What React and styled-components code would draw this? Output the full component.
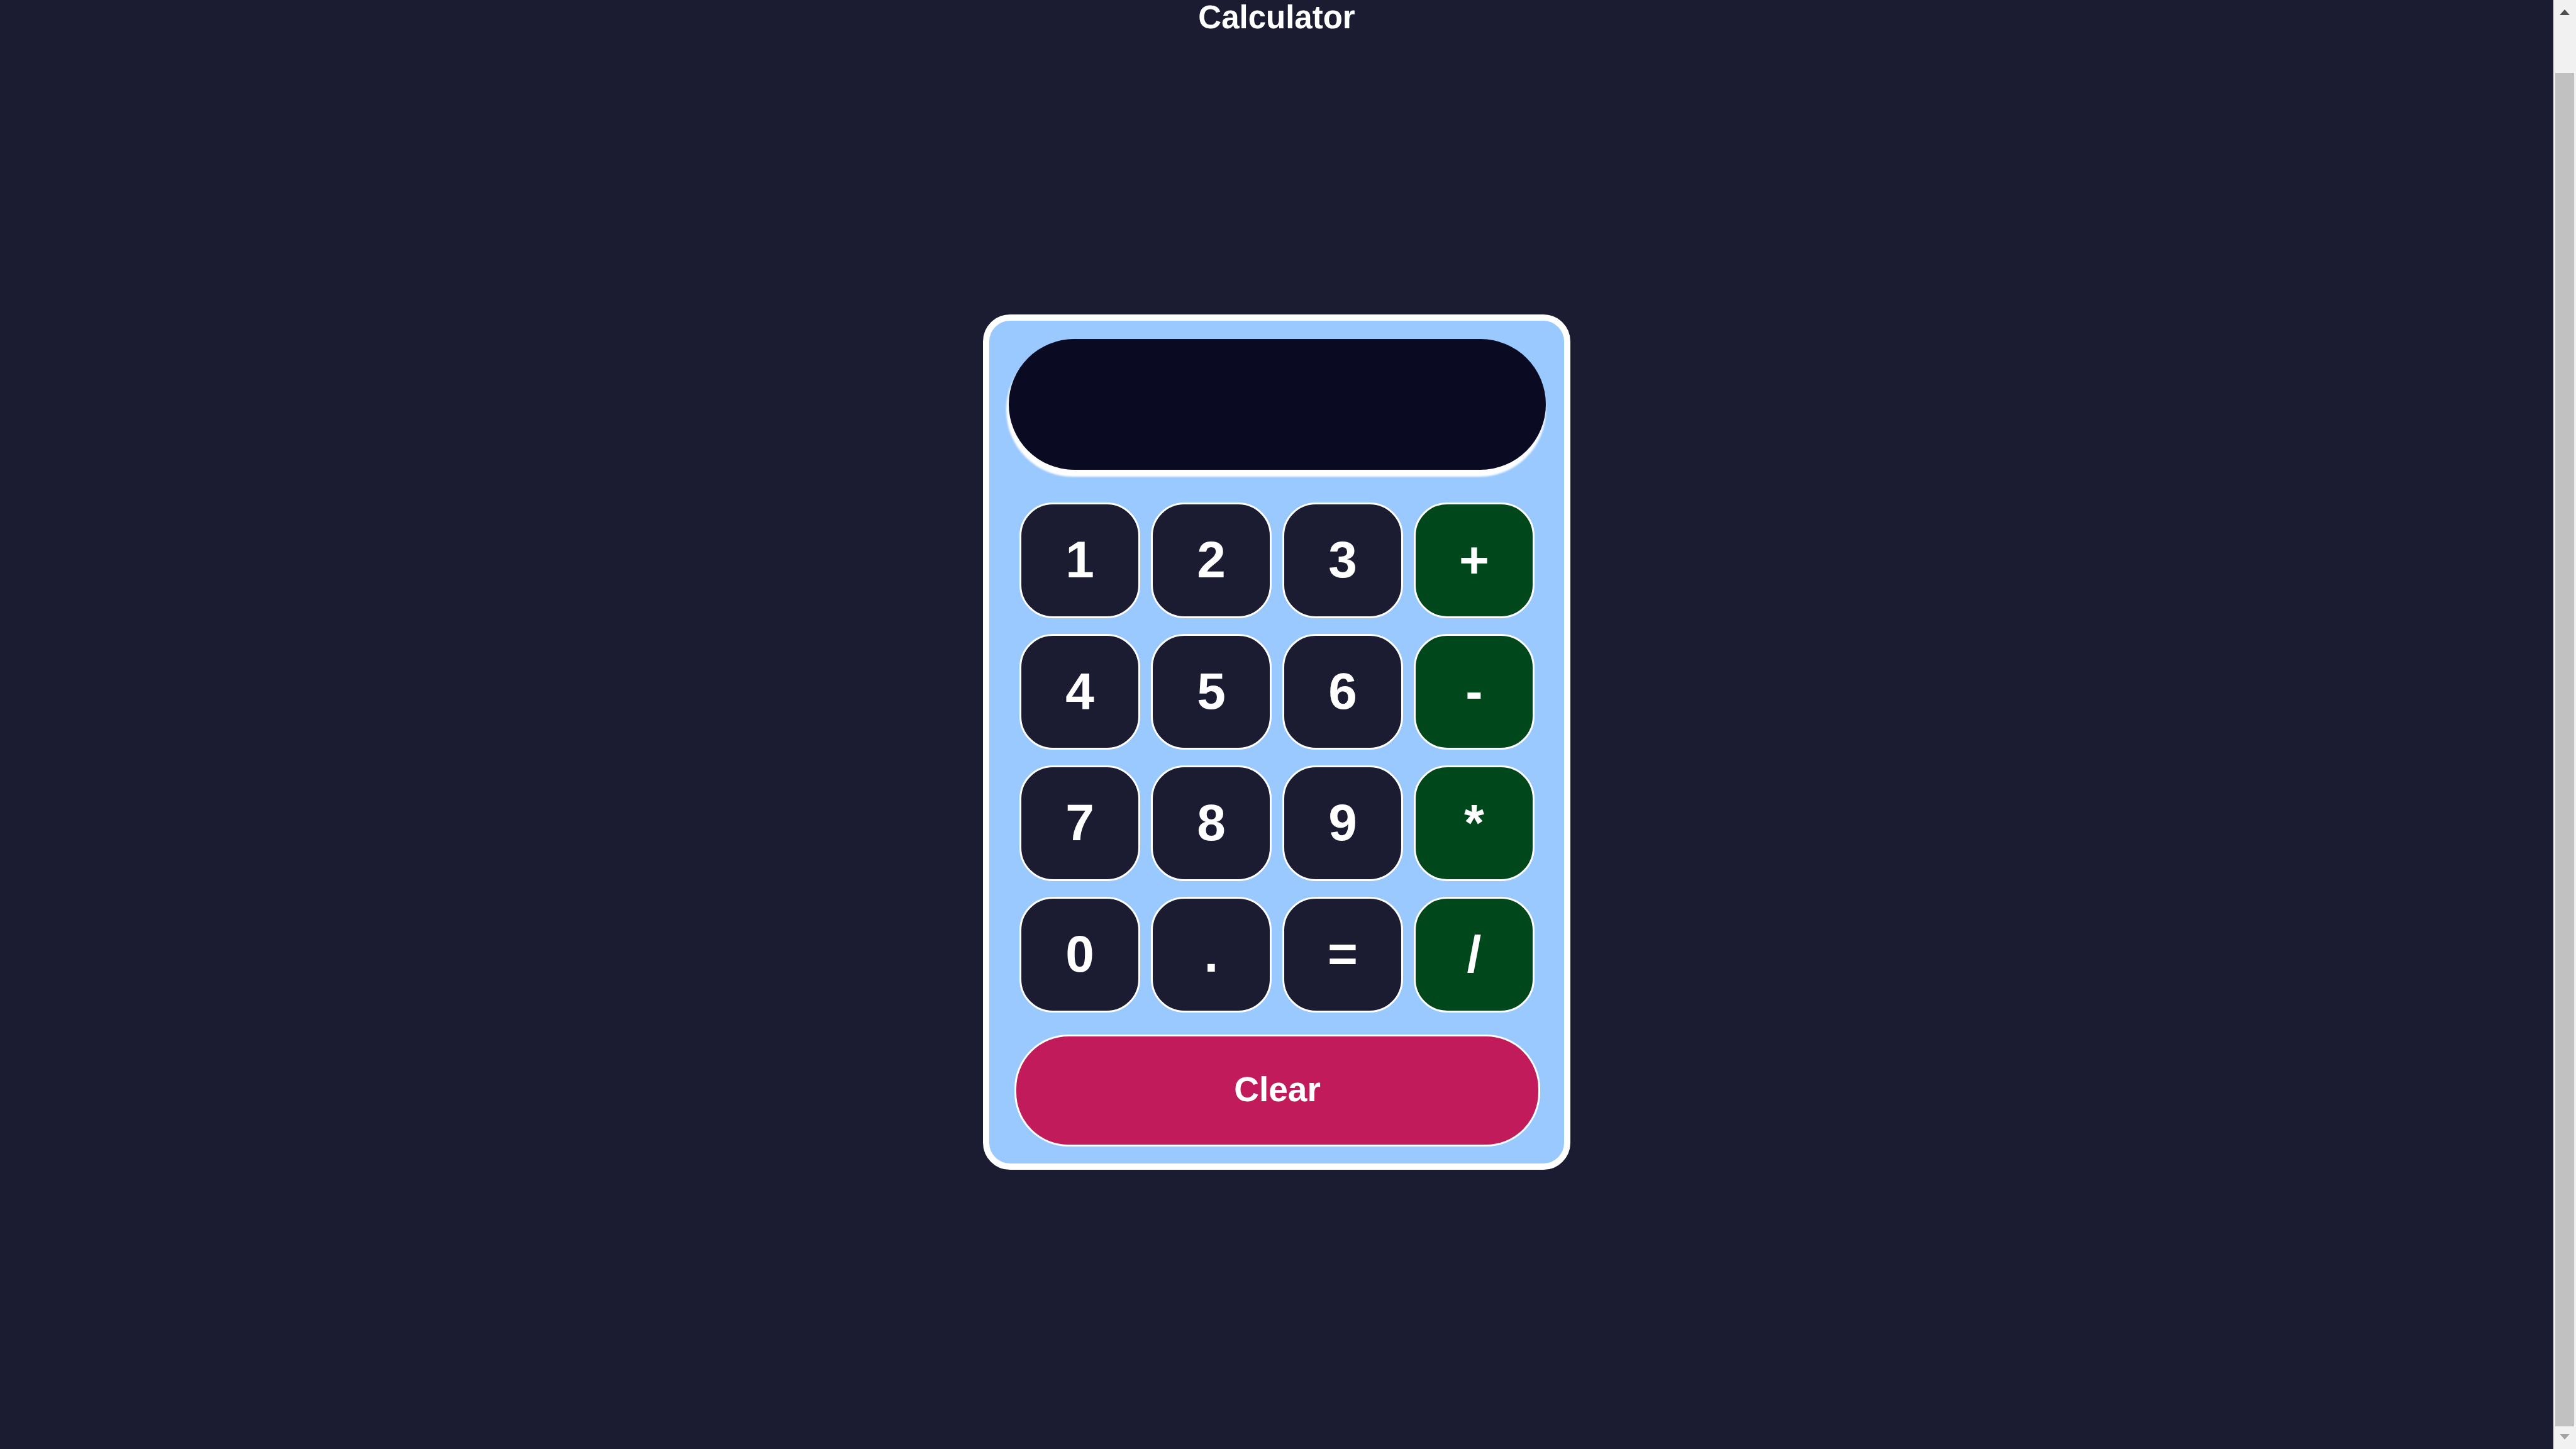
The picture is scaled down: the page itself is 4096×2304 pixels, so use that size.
import React, { useState } from "react";
import styled, { createGlobalStyle } from "styled-components";

const color = {
  page: "#1b1b32",
  display: "#0a0a23",
  card: "#99c9ff",
  operator: "#00471b",
  clear: "#c21b5b",
  white: "#ffffff",
};

const GlobalStyle = createGlobalStyle`
  *, *::before, *::after { box-sizing: border-box; }
  body {
    margin: 0;
    background: ${color.page};
    color: ${color.white};
    font-family: "Liberation Sans", Arial, sans-serif;
  }
`;

const Shell = styled.div`
  display: flex;
  min-height: 100vh;
`;

const Page = styled.div`
  flex: 1;
  display: flex;
  flex-direction: column;
`;

const Header = styled.header`
  text-align: center;
`;

const Title = styled.h1`
  margin: 0;
  font-size: 51px;
  line-height: 56px;
  font-weight: 700;
`;

const Main = styled.main`
  flex: 1;
  display: flex;
  align-items: center;
  justify-content: center;
`;

const Card = styled.section`
  display: flex;
  flex-direction: column;
  width: 100%;
  max-width: 934px;
  padding: 29px 29px 27px 31px;
  border: 10px solid ${color.white};
  border-radius: 43px;
  background: ${color.card};
`;

const Display = styled.input`
  width: 100%;
  height: 208px;
  padding: 0 82px;
  border: 0;
  border-radius: 104px;
  outline: 0;
  background: ${color.display};
  box-shadow: -2px 9px 3px 2px ${color.white};
  color: ${color.white};
  font: 700 82px "Liberation Sans", Arial, sans-serif;
  text-align: right;
`;

const Keypad = styled.div`
  display: grid;
  grid-template-columns: repeat(4, 1fr);
  grid-auto-rows: 184px;
  gap: 25px 17px;
  margin: 52px 18px 35px 17px;
`;

const Button = styled.button`
  padding: 0 0 2px;
  border: 3px solid ${color.white};
  color: ${color.white};
  font-family: inherit;
  font-weight: 700;
  cursor: pointer;
`;

const Key = styled(Button)`
  border-radius: 53px;
  background: ${(p) => (p.$operator ? color.operator : color.page)};
  font-size: 82px;
`;

const ClearButton = styled(Button)`
  height: 178px;
  margin: 0 9px;
  padding-bottom: 4px;
  border-radius: 86px;
  background: ${color.clear};
  font-size: 55px;
`;

const ScrollBar = styled.aside`
  display: flex;
  flex-direction: column;
  width: 36px;
  background: #f1f1f1;
`;

const ScrollArrow = styled.button`
  display: flex;
  align-items: center;
  justify-content: center;
  height: 36px;
  padding: ${(p) => (p.$down ? "0 0 3px" : "3px 0 0")};
  border: 0;
  background: transparent;
  color: ${(p) => (p.disabled ? "#a3a3a3" : "#505050")};
`;

const ScrollTrack = styled.div`
  flex: 1;
  display: flex;
  padding: 80px 3px 0;
`;

const ScrollThumb = styled.div`
  flex: 1;
  background: #c1c1c1;
`;

const keys = ["1", "2", "3", "+", "4", "5", "6", "-", "7", "8", "9", "*", "0", ".", "=", "/"];
const operators = ["+", "-", "*", "/"];

function calculate(expression) {
  const tokens = expression.match(/\d*\.?\d+|[-+*/]/g) || [];
  if (!tokens.length) return "";
  const terms = [Number(tokens[0])];
  for (let i = 1; i < tokens.length - 1; i += 2) {
    const n = Number(tokens[i + 1]);
    if (tokens[i] === "+") terms.push(n);
    else if (tokens[i] === "-") terms.push(-n);
    else if (tokens[i] === "*") terms.push(terms.pop() * n);
    else terms.push(terms.pop() / n);
  }
  return String(terms.reduce((a, b) => a + b, 0));
}

export default function App() {
  const [value, setValue] = useState("");
  const press = (key) => setValue((v) => (key === "=" ? calculate(v) : v + key));

  return (
    <>
      <GlobalStyle />
      <Shell>
        <Page>
          <Header>
            <Title>Calculator</Title>
          </Header>
          <Main>
            <Card aria-label="Calculator">
              <Display type="text" aria-label="Result" readOnly value={value} />
              <Keypad>
                {keys.map((key) => (
                  <Key
                    key={key}
                    type="button"
                    $operator={operators.includes(key)}
                    onClick={() => press(key)}
                  >
                    {key}
                  </Key>
                ))}
              </Keypad>
              <ClearButton type="button" onClick={() => setValue("")}>
                Clear
              </ClearButton>
            </Card>
          </Main>
        </Page>
        <ScrollBar>
          <ScrollArrow type="button" aria-label="Scroll up">
            <svg width="16" height="9" viewBox="0 0 16 9" aria-hidden="true">
              <path d="M8 0 L16 9 H0 Z" fill="currentColor" />
            </svg>
          </ScrollArrow>
          <ScrollTrack>
            <ScrollThumb />
          </ScrollTrack>
          <ScrollArrow type="button" aria-label="Scroll down" $down disabled>
            <svg width="16" height="9" viewBox="0 0 16 9" aria-hidden="true">
              <path d="M0 0 H16 L8 9 Z" fill="currentColor" />
            </svg>
          </ScrollArrow>
        </ScrollBar>
      </Shell>
    </>
  );
}
